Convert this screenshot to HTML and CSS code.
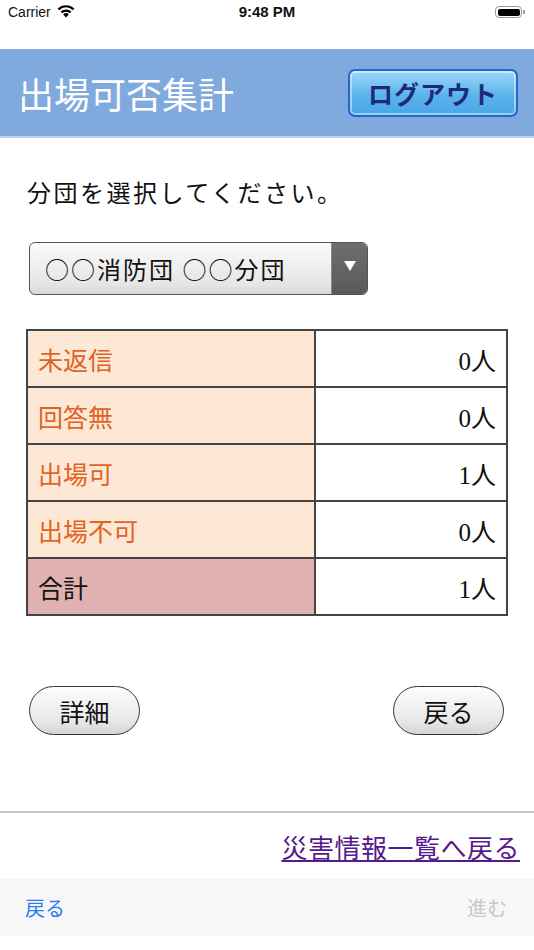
FILE: index.html
```html
<!DOCTYPE html>
<html lang="ja">
<head>
    <meta charset="UTF-8">
    <meta name="viewport" content="width=device-width, initial-scale=1.0">
    <title>出場可否集計</title>
    <link rel="stylesheet" href="styles.css">
</head>
<body>
    <div class="status-bar">
        <div class="status-left">
            <span>Carrier</span>
            <svg class="wifi" width="18" height="13" viewBox="0 0 18 13">
                <path d="M9 12.5 L6.2 9.4 A4 4 0 0 1 11.8 9.4 Z" fill="#000"/>
                <path d="M4.4 7.4 A6.6 6.6 0 0 1 13.6 7.4" stroke="#000" stroke-width="2.2" fill="none"/>
                <path d="M1.4 4.4 A10.8 10.8 0 0 1 16.6 4.4" stroke="#000" stroke-width="2.2" fill="none"/>
            </svg>
        </div>
        <div class="status-time">9:48 PM</div>
        <div class="status-right">
            <div class="battery"><div class="battery-fill"></div></div>
            <div class="battery-tip"></div>
        </div>
    </div>

    <div class="header">
        <h1>出場可否集計</h1>
        <button class="logout-btn">ログアウト</button>
    </div>

    <div class="content">
        <p class="prompt">分団を選択してください。</p>

        <div class="select-box">
            <span class="select-text">○○消防団 ○○分団</span>
            <span class="select-arrow"></span>
        </div>

        <table class="summary">
            <tr><th>未返信</th><td>0人</td></tr>
            <tr><th>回答無</th><td>0人</td></tr>
            <tr><th>出場可</th><td>1人</td></tr>
            <tr><th>出場不可</th><td>0人</td></tr>
            <tr class="total"><th>合計</th><td>1人</td></tr>
        </table>

        <div class="actions">
            <button class="pill-btn">詳細</button>
            <button class="pill-btn">戻る</button>
        </div>
    </div>

    <div class="footer">
        <a href="#" class="back-link">災害情報一覧へ戻る</a>
    </div>

    <div class="toolbar">
        <span class="tool-back">戻る</span>
        <span class="tool-forward">進む</span>
    </div>
</body>
</html>
```

FILE: styles.css
```css
body {
    margin: 0;
    width: 534px;
    background: #fff;
    font-family: 'Noto Sans CJK JP', 'Noto Sans', sans-serif;
    color: #111;
}

.status-bar {
    height: 49px;
    display: flex;
    justify-content: space-between;
    align-items: flex-start;
    padding: 0 8px;
    box-sizing: border-box;
    font-family: 'Liberation Sans', Arial, sans-serif;
    font-size: 14px;
    position: relative;
}

.status-left {
    display: flex;
    align-items: center;
    gap: 6px;
    height: 24px;
}

.wifi {
    margin-top: -2px;
}

.status-time {
    position: absolute;
    left: 0;
    right: 0;
    top: 0;
    height: 24px;
    line-height: 24px;
    text-align: center;
    font-weight: bold;
    font-size: 15px;
}

.status-right {
    display: flex;
    align-items: center;
    height: 24px;
    margin-right: 1px;
}

.battery {
    width: 27px;
    height: 12px;
    border: 1px solid #999;
    border-radius: 4px;
    padding: 1.5px;
    box-sizing: border-box;
    display: flex;
}

.battery-fill {
    flex: 1;
    background: #000;
    border-radius: 2px;
}

.battery-tip {
    width: 2px;
    height: 4px;
    background: #999;
    border-radius: 0 1px 1px 0;
    margin-left: 1px;
}

.header {
    height: 87px;
    background: #80a9dd;
    display: flex;
    align-items: center;
    justify-content: space-between;
    padding: 0 18px;
    border-bottom: 2px solid #c3d6ef;
}

.header h1 {
    margin: 0;
    color: #fff;
    font-size: 36px;
    font-weight: normal;
}

.logout-btn {
    width: 170px;
    height: 48px;
    margin-right: -2px;
    background: linear-gradient(#9fd8f7, #5bb3ec 55%, #4aa6e8);
    border: 2px solid #2266d4;
    border-radius: 7px;
    box-shadow: inset 0 0 0 2px rgba(255, 255, 255, 0.45);
    color: #1d2a7a;
    font-family: 'Noto Sans CJK JP', sans-serif;
    font-size: 25px;
    font-weight: bold;
    letter-spacing: 1px;
    padding: 0;
}

.content {
    padding: 0 26px;
}

.prompt {
    margin: 38px 0 0 1px;
    font-size: 24px;
    line-height: 32px;
    letter-spacing: 2.5px;
}

.select-box {
    margin: 34px 0 0 3px;
    width: 339px;
    height: 53px;
    box-sizing: border-box;
    border: 1.5px solid #555;
    border-radius: 6px;
    background: linear-gradient(#fafafa, #e6e6e6 80%, #d8d8d8);
    display: flex;
    align-items: center;
    overflow: hidden;
}

.select-text {
    flex: 1;
    padding-left: 15px;
    font-size: 24px;
    letter-spacing: 2px;
}

.select-arrow {
    width: 35px;
    height: 100%;
    background: linear-gradient(#6e6e6e, #5a5a5a);
    border-left: 1px solid #888;
    display: flex;
    align-items: center;
    justify-content: center;
}

.select-arrow::after {
    content: "";
    border-left: 6px solid transparent;
    border-right: 6px solid transparent;
    border-top: 10px solid #fff;
    margin-top: -6px;
}

.summary {
    margin-top: 34px;
    width: 482px;
    border-collapse: collapse;
    border: 2px solid #444;
}

.summary th,
.summary td {
    border: 2px solid #444;
    height: 55px;
    padding: 0 10px;
    font-size: 25px;
    font-weight: normal;
}

.summary th {
    width: 266px;
    text-align: left;
    background: #fde8d6;
    color: #e2621f;
}

.summary td {
    text-align: right;
    background: #fff;
    font-family: 'Liberation Serif', 'Noto Sans CJK JP', serif;
    color: #111;
}

.summary .total th {
    background: #e1b0b0;
    color: #111;
}

.actions {
    margin: 70px 4px 0 3px;
    display: flex;
    justify-content: space-between;
}

.pill-btn {
    width: 111px;
    height: 49px;
    border: 1.5px solid #333;
    border-radius: 25px;
    background: linear-gradient(#fdfdfd, #e8e8e8 70%, #d6d6d6);
    font-family: 'Noto Sans CJK JP', sans-serif;
    font-size: 25px;
    color: #111;
    padding: 0;
}

.footer {
    margin-top: 76px;
    border-top: 2px solid #c8c8c8;
    height: 66px;
    display: flex;
    justify-content: flex-end;
    align-items: center;
    padding-right: 14px;
}

.back-link {
    color: #551a8b;
    font-size: 26px;
    letter-spacing: 0.5px;
}

.toolbar {
    height: 57px;
    background: #f7f7f7;
    display: flex;
    justify-content: space-between;
    align-items: center;
    padding: 0 27px 0 25px;
    font-size: 20px;
}

.tool-back {
    color: #2d7cf6;
}

.tool-forward {
    color: #c8c8c8;
}
```
